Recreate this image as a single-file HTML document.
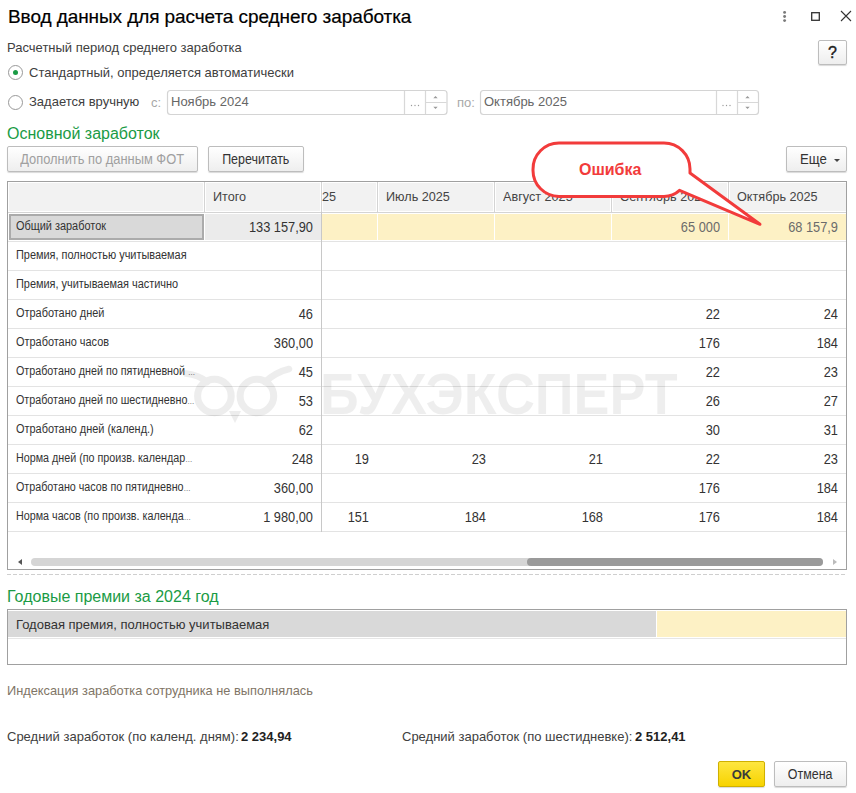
<!DOCTYPE html>
<html><head><meta charset="utf-8">
<style>
*{box-sizing:border-box;margin:0;padding:0}
html,body{width:856px;height:793px;overflow:hidden;background:#fff;font-family:"Liberation Sans",sans-serif;color:#333}
.a{position:absolute;white-space:nowrap}
#title{left:8px;top:6px;font-size:19px;color:#000;letter-spacing:-0.08px;-webkit-text-stroke:0.2px #000}
.t13{font-size:13px;color:#404040}
.green{color:#1a9b45;font-size:16px}
.btn{position:absolute;border:1px solid #bdbdbd;border-radius:2px;background:linear-gradient(#fff,#eee);box-shadow:0 1px 1px rgba(0,0,0,.15);font-size:13px;text-align:center;color:#333}
.bt{display:inline-block;font-size:14px;transform:scaleX(0.89);color:inherit}
.ht{display:inline-block;font-size:13.6px;transform:scaleX(0.93);transform-origin:0 50%}
.radio{position:absolute;width:15px;height:15px;border:1px solid #999;border-radius:50%;background:#fff}
.inp{position:absolute;border:1px solid #d3d3d3;border-radius:3px;background:#fff;font-size:13px;color:#999}
.grid{position:absolute;left:7px;top:181px;width:840px;height:389px;border:1px solid #a0a0a0;overflow:hidden;background:#fff}
.hdr{position:absolute;left:0;top:0;height:31px;width:100%;background:#f2f2f2;border-bottom:1px solid #d4d4d4}
.hc{position:absolute;top:0;height:30px;line-height:30px;font-size:13.3px;color:#444;padding-left:8px;border-right:1px solid #d4d4d4;box-shadow:inset -1px 0 #fff,inset 1px 1px #fff,inset 0 -1px #fff}
.row{position:absolute;left:0;width:100%;height:29px;border-bottom:1px solid #e3e3e3}
.c{position:absolute;top:0px;height:28px;line-height:29px;font-size:14.4px;color:#333}
.r{transform:scaleX(0.89);transform-origin:100% 0}
.nm{left:8px;top:0;font-size:12px;line-height:27px;color:#333;transform:scaleX(0.91);transform-origin:0 0}
.r{text-align:right}
</style></head><body>
<div id="title" class="a">Ввод данных для расчета среднего заработка</div>
<!-- window icons -->
<svg class="a" style="left:770px;top:0" width="86" height="30">
 <circle cx="14.6" cy="12.4" r="1.45" fill="#7a7a7a"/><circle cx="14.6" cy="16.5" r="1.45" fill="#7a7a7a"/><circle cx="14.6" cy="20.6" r="1.45" fill="#7a7a7a"/>
 <rect x="41.7" y="12.7" width="7.6" height="7.6" fill="none" stroke="#333" stroke-width="1.3"/>
 <path d="M71 11 L81 21 M81 11 L71 21" stroke="#333" stroke-width="1.1"/>
</svg>
<div class="btn" style="left:818px;top:40px;width:29px;height:25px;line-height:23px;font-size:16px;color:#222;-webkit-text-stroke:0.4px #222">?</div>

<div class="a t13" style="left:7px;top:40px">Расчетный период среднего заработка</div>
<div class="radio" style="left:8px;top:65px"></div>
<div class="a" style="left:12.8px;top:69.8px;width:5.4px;height:5.4px;border-radius:50%;background:#1a9b45"></div>
<div class="a t13" style="left:29px;top:65px">Стандартный, определяется автоматически</div>
<div class="radio" style="left:8px;top:95px"></div>
<div class="a t13" style="left:29px;top:94px">Задается вручную</div>
<div class="a t13" style="left:151px;top:95px;color:#a8a8a8">с:</div>
<div class="a t13" style="left:457px;top:95px;color:#a8a8a8">по:</div>
<svg class="a" style="left:0;top:0" width="856" height="130">
 <g fill="#fff" stroke="#d4d4d4" stroke-width="1.2">
  <rect x="167.5" y="90.5" width="279.5" height="24" rx="3"/>
  <rect x="480.5" y="90.5" width="278" height="24" rx="3"/>
 </g>
 <g stroke="#d8d8d8" stroke-width="1.2">
  <path d="M404.5 91 V114 M425.5 91 V114 M426 102.5 H446.5"/>
  <path d="M716.5 91 V114 M737.5 91 V114 M738 102.5 H758"/>
 </g>
 <g fill="#9a9a9a">
  <circle cx="411.5" cy="105.5" r="0.7"/><circle cx="415" cy="105.5" r="0.7"/><circle cx="418.5" cy="105.5" r="0.7"/>
  <circle cx="723" cy="105.5" r="0.7"/><circle cx="726.5" cy="105.5" r="0.7"/><circle cx="730" cy="105.5" r="0.7"/>
  <path d="M433.3 98.3 L435.5 96 L437.7 98.3 Z M433.3 106.8 L435.5 109 L437.7 106.8 Z"/>
  <path d="M745.3 98.3 L747.5 96 L749.7 98.3 Z M745.3 106.8 L747.5 109 L749.7 106.8 Z"/>
 </g>
</svg>
<div class="a t13" style="left:171px;top:94px;color:#666">Ноябрь 2024</div>
<div class="a t13" style="left:484px;top:94px;color:#666">Октябрь 2025</div>

<div class="a green" style="left:7px;top:125px">Основной заработок</div>
<div class="btn" style="left:7px;top:146px;width:191px;height:26px;line-height:24px;color:#a0a0a0"><span class="bt" style="transform:scaleX(0.92)">Дополнить по данным ФОТ</span></div>
<div class="btn" style="left:208px;top:146px;width:96px;height:26px;line-height:24px"><span class="bt">Перечитать</span></div>
<div class="btn" style="left:786px;top:146px;width:61px;height:26px;line-height:24px;text-align:left;padding-left:13px"><span class="bt" style="transform-origin:0 50%;transform:scaleX(0.94)">Еще</span><span class="a" style="left:47px;top:11.5px;width:0;height:0;border-left:3px solid transparent;border-right:3px solid transparent;border-top:3px solid #444"></span></div>

<div class="grid">
 <div class="hdr">
  <div class="hc" style="left:0;width:197px"></div>
  <div class="hc" style="left:197px;width:117px"><span class="ht">Итого</span></div>
  <div class="hc" style="left:314px;width:56px;padding-left:0"><span class="ht">25</span></div>
  <div class="hc" style="left:370px;width:117px"><span class="ht">Июль 2025</span></div>
  <div class="hc" style="left:487px;width:117px"><span class="ht">Август 2025</span></div>
  <div class="hc" style="left:604px;width:117px"><span class="ht">Сентябрь 2025</span></div>
  <div class="hc" style="left:721px;width:130px"><span class="ht">Октябрь 2025</span></div>
 </div>
<!--ROWS-->
<div class="row" style="top:31px">
<div class="a" style="left:1px;top:1px;width:195px;height:26px;background:#d9d9d9;border:2px solid #ababab"></div>
<div class="a" style="left:197px;top:1px;width:116px;height:26px;background:#ebebeb"></div>
<div class="a" style="left:314px;top:1px;width:525px;height:26px;background:#fdf1c5"></div>
<div class="a" style="left:369px;top:1px;width:1px;height:26px;background:#fff"></div>
<div class="a" style="left:486px;top:1px;width:1px;height:26px;background:#fff"></div>
<div class="a" style="left:603px;top:1px;width:1px;height:26px;background:#fff"></div>
<div class="a" style="left:720px;top:1px;width:1px;height:26px;background:#fff"></div>
<div class="c nm">Общий заработок</div>
<div class="c r" style="left:196px;width:109px">133 157,90</div>
<div class="c r" style="left:612px;width:100px;color:#6b6b6b">65 000</div>
<div class="c r" style="left:730px;width:100px;color:#6b6b6b">68 157,9</div>
</div>
<div class="row" style="top:60px">
<div class="c nm">Премия, полностью учитываемая</div>
</div>
<div class="row" style="top:89px">
<div class="c nm">Премия, учитываемая частично</div>
</div>
<div class="row" style="top:118px">
<div class="c nm">Отработано дней</div>
<div class="c r" style="left:196px;width:109px">46</div>
<div class="c r" style="left:612px;width:100px;color:#333">22</div>
<div class="c r" style="left:730px;width:100px;color:#333">24</div>
</div>
<div class="row" style="top:147px">
<div class="c nm">Отработано часов</div>
<div class="c r" style="left:196px;width:109px">360,00</div>
<div class="c r" style="left:612px;width:100px;color:#333">176</div>
<div class="c r" style="left:730px;width:100px;color:#333">184</div>
</div>
<div class="row" style="top:176px">
<div class="c nm" style="transform:scaleX(0.895)">Отработано дней по пятидневной <span style='font-size:8px'>…</span></div>
<div class="c r" style="left:196px;width:109px">45</div>
<div class="c r" style="left:612px;width:100px;color:#333">22</div>
<div class="c r" style="left:730px;width:100px;color:#333">23</div>
</div>
<div class="row" style="top:205px">
<div class="c nm" style="transform:scaleX(0.895)">Отработано дней по шестидневно<span style='font-size:8px'>…</span></div>
<div class="c r" style="left:196px;width:109px">53</div>
<div class="c r" style="left:612px;width:100px;color:#333">26</div>
<div class="c r" style="left:730px;width:100px;color:#333">27</div>
</div>
<div class="row" style="top:234px">
<div class="c nm">Отработано дней (календ.)</div>
<div class="c r" style="left:196px;width:109px">62</div>
<div class="c r" style="left:612px;width:100px;color:#333">30</div>
<div class="c r" style="left:730px;width:100px;color:#333">31</div>
</div>
<div class="row" style="top:263px">
<div class="c nm" style="transform:scaleX(0.895)">Норма дней (по произв. календар<span style='font-size:8px'>…</span></div>
<div class="c r" style="left:196px;width:109px">248</div>
<div class="c r" style="left:261px;width:100px;color:#333">19</div>
<div class="c r" style="left:378px;width:100px;color:#333">23</div>
<div class="c r" style="left:495px;width:100px;color:#333">21</div>
<div class="c r" style="left:612px;width:100px;color:#333">22</div>
<div class="c r" style="left:730px;width:100px;color:#333">23</div>
</div>
<div class="row" style="top:292px">
<div class="c nm" style="transform:scaleX(0.895)">Отработано часов по пятидневно<span style='font-size:8px'>…</span></div>
<div class="c r" style="left:196px;width:109px">360,00</div>
<div class="c r" style="left:612px;width:100px;color:#333">176</div>
<div class="c r" style="left:730px;width:100px;color:#333">184</div>
</div>
<div class="row" style="top:321px">
<div class="c nm" style="transform:scaleX(0.895)">Норма часов (по произв. календа<span style='font-size:8px'>…</span></div>
<div class="c r" style="left:196px;width:109px">1 980,00</div>
<div class="c r" style="left:261px;width:100px;color:#333">151</div>
<div class="c r" style="left:378px;width:100px;color:#333">184</div>
<div class="c r" style="left:495px;width:100px;color:#333">168</div>
<div class="c r" style="left:612px;width:100px;color:#333">176</div>
<div class="c r" style="left:730px;width:100px;color:#333">184</div>
</div>
<!--/ROWS-->
<div class="a" style="left:313px;top:30px;width:1px;height:320px;background:#c8c8c8"></div>
<div class="a" style="left:9.5px;top:377px;width:0;height:0;border-top:3px solid transparent;border-bottom:3px solid transparent;border-right:4px solid #555"></div>
<div class="a" style="left:23px;top:376px;width:792px;height:8px;border-radius:4px;background:#d5d5d5"></div>
<div class="a" style="left:519px;top:376px;width:296px;height:8px;border-radius:4px;background:#9a9a9a"></div>
<div class="a" style="left:825px;top:377px;width:0;height:0;border-top:3px solid transparent;border-bottom:3px solid transparent;border-left:4px solid #bbb"></div>

</div>

<div class="a" style="left:7px;top:574px;width:838px;height:1px;background:repeating-linear-gradient(90deg,#cfcfcf 0 4px,transparent 4px 6px)"></div>
<svg class="a" style="left:0;top:0;pointer-events:none" width="856" height="793">
<g opacity="0.065">
<circle cx="214.4" cy="396" r="16.8" fill="none" stroke="#000" stroke-width="7"/>
<circle cx="256.9" cy="396" r="16.8" fill="none" stroke="#000" stroke-width="7"/>
<path d="M186 373.5 Q199 375 207 382 M289 369 Q276 372 265 382" fill="none" stroke="#000" stroke-width="6.5" stroke-linecap="round"/>
<path d="M229 411 L235 423 L241 411 Z" fill="#000"/>
</g>
</svg>
<div class="a" style="left:320px;top:361px;font-size:57px;font-weight:bold;color:rgba(0,0,0,0.065);pointer-events:none;transform:scaleX(0.945);transform-origin:0 0">БУХЭКСПЕРТ</div>
<svg class="a" style="left:0;top:0" width="856" height="793">
<path d="M559 143 H664 A26 26 0 0 1 690 169 V173 L760 224.3 L679.5 190.3 Q673 196.4 664 196.4 H559 A26 26 0 0 1 533 170.4 V169.4 A26 26 0 0 1 559 143 Z" fill="#fff" stroke="#f23b3b" stroke-width="3" stroke-linejoin="round"/>
</svg>
<div class="a" style="left:579px;top:161px;font-size:16px;font-weight:bold;color:#f23b3b">Ошибка</div>
<div class="a green" style="left:7px;top:588px">Годовые премии за 2024 год</div>
<div class="a" style="left:7px;top:609px;width:840px;height:56px;border:1px solid #a0a0a0;background:#fff">
 <div class="a" style="left:0;top:1px;width:648px;height:26px;background:#d9d9d9;font-size:13px;line-height:27px;padding-left:8px;color:#333">Годовая премия, полностью учитываемая</div>
 <div class="a" style="left:649px;top:1px;width:189px;height:26px;background:#fdf1c5"></div>
 <div class="a" style="left:0;top:28px;width:838px;height:1px;background:#e6e6e6"></div>
</div>
<div class="a t13" style="left:7px;top:683px;color:#7f7566;font-size:12.8px">Индексация заработка сотрудника не выполнялась</div>
<div class="a t13" style="left:7px;top:729px">Средний заработок (по календ. дням):</div><div class="a t13" style="left:241px;top:729px;font-weight:bold;color:#222">2 234,94</div>
<div class="a t13" style="left:402px;top:729px">Средний заработок (по шестидневке):</div><div class="a t13" style="left:635px;top:729px;font-weight:bold;color:#222">2 512,41</div>
<div class="btn" style="left:718px;top:761px;width:47px;height:26px;line-height:25px;background:linear-gradient(#fee640,#f7d300);border-color:#cfb000;font-weight:bold;color:#3a3a3a">OK</div>
<div class="btn" style="left:774px;top:761px;width:73px;height:26px;line-height:25px"><span class="bt">Отмена</span></div>
</body></html>
